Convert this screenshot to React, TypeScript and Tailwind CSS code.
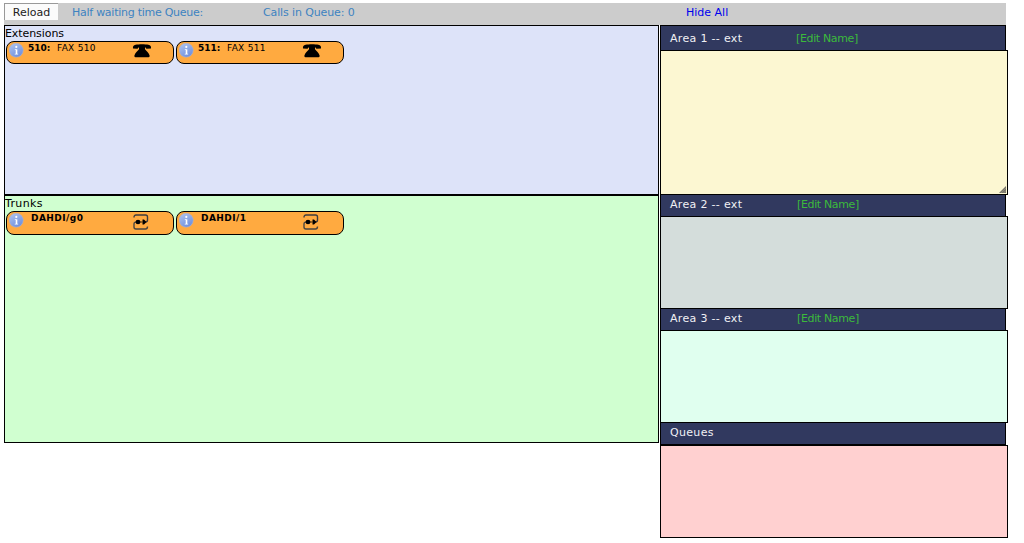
import React from "react";

function InfoIcon({ id }: { id: string }) {
  return (
    <svg className="mt-[1px] ml-[2px] h-[15px] w-[15px] shrink-0" viewBox="0 0 15 15">
      <defs>
        <linearGradient id={id} x1="0" y1="0" x2="0.6" y2="1">
          <stop offset="0" stopColor="#b4c8f0" />
          <stop offset="1" stopColor="#6f90de" />
        </linearGradient>
      </defs>
      <circle cx="7.2" cy="7.2" r="7" fill={`url(#${id})`} stroke="#b3b3c4" strokeWidth="0.6" />
      <circle cx="7.3" cy="3.9" r="1.1" fill="#fff" />
      <path d="M5.8 6.200h2.500v4.600h.9v.8H5.700v-.8h1V7h-.9z" fill="#fff" />
    </svg>
  );
}

function PhoneIcon() {
  return (
    <svg className="h-[14px] w-[20px]" viewBox="0 0 20 14">
      <path d="M1 4.600C.7 2.400 1.500 1.200 3.600 .8 7 0 13 0 16.400 .8c2.100.4 2.900 1.600 2.600 3.800L14.400 4.800 13.600 3.400H6.400L5.600 4.800z" fill="#000" />
      <path d="M7 3h6v2.200c1 1.800 4.200 3.600 4.600 6.200.2 1.400-.6 1.900-2 1.900H4.400c-1.400 0-2.200-.5-2-1.900C2.800 8.800 6 7 7 5.200z" fill="#000" />
    </svg>
  );
}

function TrunkIcon() {
  return (
    <svg className="h-[16px] w-[16px]" viewBox="0 0 16 16" fill="none">
      <path d="M1 3.500Q1 1 3 1H12.500Q14.500 1 14.500 3V6Q14.500 8 12.500 8" stroke="#3d3d3f" strokeWidth="1.400" />
      <path d="M3.500 8Q1 8 1 10V13Q1 15 3 15H12.500Q14.500 15 14.500 12.500" stroke="#4a4640" strokeWidth="1.400" />
      <ellipse cx="5" cy="8" rx="2.4" ry="2.3" fill="#000" />
      <path d="M9.500 5.500h1.500l2.500 2.500-2.500 2.500H9.500z" fill="#000" />
      <path d="M7 8h2.500" stroke="#000" strokeWidth="0.8" />
    </svg>
  );
}

function Extension({ number, name }: { number: string; name: string }) {
  return (
    <div className="flex h-[23px] w-[168px] rounded-[8px] border border-black bg-[#ffaa40]">
      <InfoIcon id={`info-${number}`} />
      <div className="ml-[4px] flex w-[103px] text-[9px] leading-[13px]">
        <b className="w-[29px]">{number}:</b>
        <span className="tracking-[0.3px]">{name}</span>
      </div>
      <div className="mt-[2px] ml-[1px]"><PhoneIcon /></div>
    </div>
  );
}

function Trunk({ name }: { name: string }) {
  return (
    <div className="flex h-[24px] w-[168px] rounded-[8px] border border-black bg-[#ffaa40]">
      <InfoIcon id={`info-${name.replace("/", "-")}`} />
      <b className="ml-[7px] w-[101px] text-[9px] leading-[13px] tracking-[0.45px]">{name}</b>
      <div className="mt-[2px] ml-[1px]"><TrunkIcon /></div>
    </div>
  );
}

function AreaHeader({ title, className, labelClass = "w-[127px]", editable = true }: { title: string; className: string; labelClass?: string; editable?: boolean }) {
  return (
    <div className={`flex w-[346px] border-x border-black bg-[#31395f] pl-[9px] text-[#f0f0f4] ${className}`}>
      <span className={`tracking-[0.32px] ${labelClass}`}>{title}</span>
      {editable && <span className="tracking-[-0.36px] text-[#3cb93c]">[Edit Name]</span>}
    </div>
  );
}

export default function App() {
  return (
    <div className="h-[543px] w-[1024px] overflow-hidden bg-white pt-[3px] pl-[4px] font-['DejaVu_Sans',sans-serif] text-[11px] leading-[13px] whitespace-nowrap text-black">
      <div className="flex h-[22px] w-[1002px] bg-[#cccccc]">
        <button className="h-[17px] w-[54px] border-t border-l border-[#999] bg-[#fbfbfb] pt-[1px] text-[11px] leading-[15px] text-[#222]">Reload</button>
        <span className="ml-[14px] w-[191px] pt-[3px] tracking-[-0.26px] text-[#3d83c1]">Half waiting time Queue:</span>
        <span className="w-[423px] pt-[3px] tracking-[-0.12px] text-[#3d83c1]">Calls in Queue: 0</span>
        <a className="pt-[3px] text-[#0000ee]">Hide All</a>
      </div>
      <div className="flex items-start gap-[1px]">
        <div className="w-[655px]">
          <section className="h-[170px] border border-black bg-[#dde3f9]">
            <div className="h-[15px] pt-[1px] tracking-[-0.08px]">Extensions</div>
            <div className="flex gap-[2px] pl-[1px]">
              <Extension number="510" name="FAX 510" />
              <Extension number="511" name="FAX 511" />
            </div>
          </section>
          <section className="h-[248px] border border-black bg-[#d0ffd0]">
            <div className="h-[15px] pt-[1px] tracking-[0.35px]">Trunks</div>
            <div className="flex gap-[2px] pl-[1px]">
              <Trunk name="DAHDI/g0" />
              <Trunk name="DAHDI/1" />
            </div>
          </section>
        </div>
        <div className="w-[348px]">
          <AreaHeader title="Area 1 -- ext" labelClass="w-[126px]" className="h-[25px] border-t pt-[6px]" />
          <div className="flex h-[145px] items-end justify-end border border-black bg-[#fcf7d2]">
            <svg className="mr-[1px] mb-[1px] h-[7px] w-[7px]" viewBox="0 0 7 7">
              <path d="M0 7L7 0V7z" fill="#77746a" />
              <path d="M2 7L7 2M4.500 7L7 4.500" stroke="#aaa691" strokeWidth="0.5" />
            </svg>
          </div>
          <AreaHeader title="Area 2 -- ext" className="h-[21px] pt-[3px]" />
          <div className="h-[93px] border border-black bg-[#d4dddb]" />
          <AreaHeader title="Area 3 -- ext" className="h-[21px] pt-[3px]" />
          <div className="h-[93px] border border-black bg-[#e0ffef]" />
          <AreaHeader title="Queues" editable={false} className="h-[22px] border-b pt-[3px]" />
          <div className="h-[93px] border border-black bg-[#ffd0d0]" />
        </div>
      </div>
    </div>
  );
}
